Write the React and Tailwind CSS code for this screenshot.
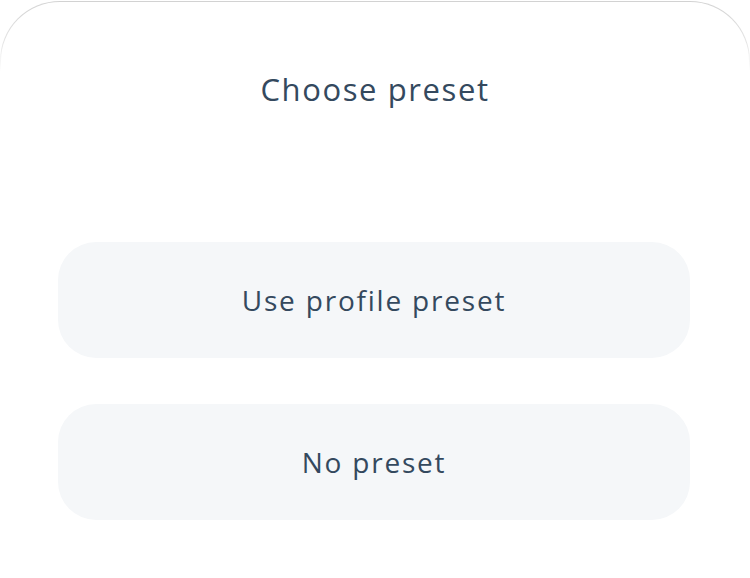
const App = () => {
  const options = ["Use profile preset", "No preset"];

  return (
    <div className="w-[750px] h-[578px] bg-white pt-px" style={{ fontFamily: '"Open Sans", sans-serif' }}>
      <div className="h-[577px] rounded-t-[60px] bg-[linear-gradient(to_bottom,#d2d2d2_0px,#e4e4e4_40px,#ffffff_70px)] px-px pt-px">
        <div className="h-full rounded-t-[59px] bg-white flex flex-col items-center">
          <h2 className="mt-[69px] text-[31px] leading-[36px] text-[#34495e] tracking-[1.6px]">
            Choose preset
          </h2>
          <div className="mt-[135px] mr-[2px] flex flex-col gap-[46px]">
            {options.map((label) => (
              <button
                key={label}
                className="w-[632px] h-[116px] rounded-[38px] bg-[#f5f7f9] text-[28px] text-[#34495e] tracking-[1.8px]"
              >
                {label}
              </button>
            ))}
          </div>
        </div>
      </div>
    </div>
  );
};

export default App;
